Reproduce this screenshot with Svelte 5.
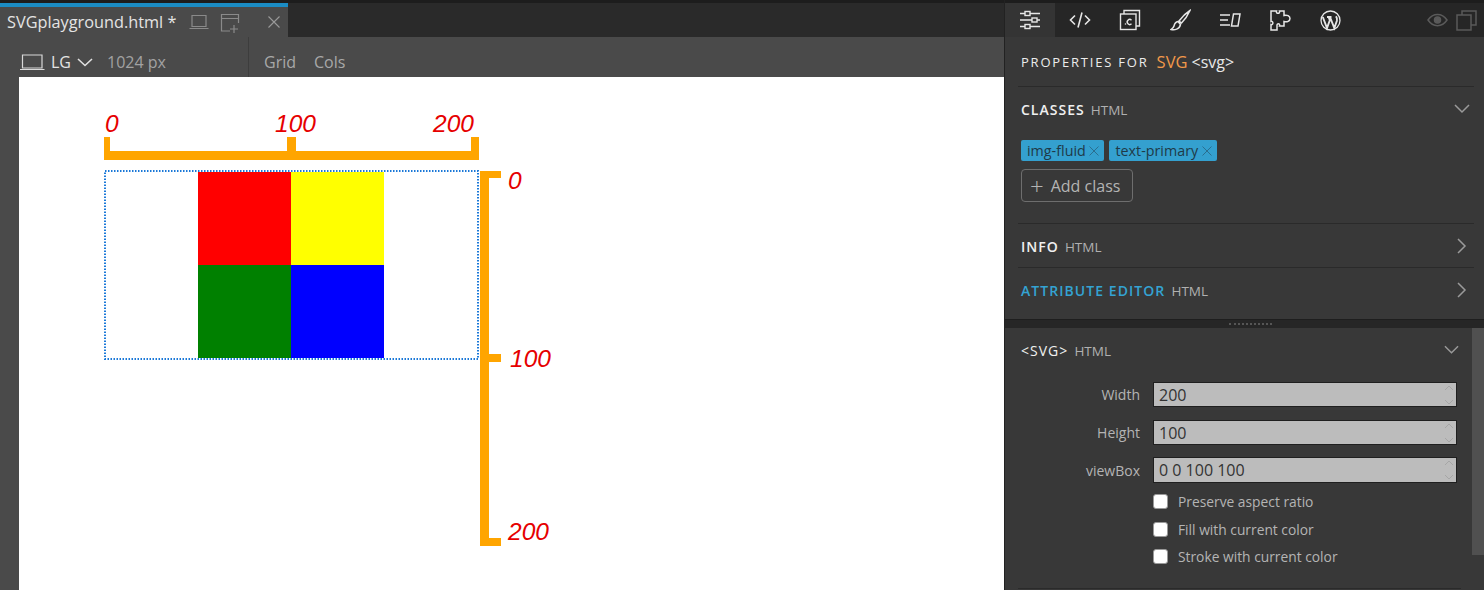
<script>
  const attrs = [
    { label: 'Width', value: '200' },
    { label: 'Height', value: '100' },
    { label: 'viewBox', value: '0 0 100 100' }
  ];
  const checks = ['Preserve aspect ratio', 'Fill with current color', 'Stroke with current color'];
  const chips = ['img-fluid', 'text-primary'];
</script>

<div class="app">
  <div class="left">
    <div class="tabbar">
      <div class="tab">
        <span class="tabname">SVGplayground.html *</span>
        <svg class="ic laptop" width="20" height="16" viewBox="0 0 20 16" fill="none" stroke="#8a8a8a" stroke-width="1.2">
          <path d="M3 1.5h14v11H3zM.5 14.5h19" />
        </svg>
        <svg class="ic newwin" width="22" height="22" viewBox="0 0 22 22" fill="none" stroke="#8a8a8a" stroke-width="1.2">
          <path d="M10 18H1.5V1.5h17V10M1.5 5.5h17M14 12v8M10 16h8" />
        </svg>
        <svg class="ic close" width="14" height="14" viewBox="0 0 14 14" fill="none" stroke="#9a9a9a" stroke-width="1.1">
          <path d="M1.5 1.5l11 11M12.5 1.5l-11 11" />
        </svg>
      </div>
    </div>
    <div class="toolbar">
      <div class="device">
        <svg width="25" height="17" viewBox="0 0 25 17" fill="none" stroke="#d8d8d8" stroke-width="1.2">
          <path d="M2.5 1H22v13H2.500zM0 15.500h24.500" />
        </svg>
        <span class="lg">LG</span>
        <svg width="16" height="9" viewBox="0 0 16 9" fill="none" stroke="#e0e0e0" stroke-width="1.6">
          <path d="M1 1l7 6.5L15 1" />
        </svg>
        <span class="px">1024 px</span>
      </div>
      <div class="grid-cols">
        <span>Grid</span>
        <span>Cols</span>
      </div>
    </div>
    <div class="stage">
      <div class="canvas">
        <svg class="drawing" width="985" height="513" viewBox="19 77 985 513">
          <g fill="orange">
            <rect x="104" y="151" width="375" height="9" />
            <rect x="104" y="137" width="6" height="20" />
            <rect x="287" y="137" width="9" height="20" />
            <rect x="471" y="137" width="8" height="20" />
            <rect x="480" y="171" width="9" height="375" />
            <rect x="480" y="171" width="21" height="7" />
            <rect x="480" y="354" width="21" height="8" />
            <rect x="480" y="538" width="21" height="8" />
          </g>
          <rect x="198" y="172" width="93" height="93" fill="red" />
          <rect x="291" y="172" width="93" height="93" fill="yellow" />
          <rect x="198" y="265" width="93" height="93" fill="green" />
          <rect x="291" y="265" width="93" height="93" fill="blue" />
          <rect x="105" y="171" width="373" height="188" fill="none" stroke="#1a78d8" stroke-width="2" stroke-dasharray="1.5 1.5" />
          <g class="nums">
            <text x="105" y="132">0</text>
            <text x="275" y="132">100</text>
            <text x="433" y="132">200</text>
            <text x="508" y="189">0</text>
            <text x="510" y="367">100</text>
            <text x="508" y="540">200</text>
          </g>
        </svg>
      </div>
    </div>
  </div>

  <div class="panel">
    <div class="iconbar">
      <div class="ibtn active">
        <svg width="22" height="20" viewBox="0 0 22 20" fill="none" stroke="#e6e6e6" stroke-width="1.4">
          <path d="M1 3.500h5M11 3.500h10M1 10h12M18 10h3M1 16.500h5M11 16.500h10" />
          <rect x="6" y="1.500" width="5" height="4" /><rect x="13" y="8" width="5" height="4" /><rect x="6" y="14.500" width="5" height="4" />
        </svg>
      </div>
      <div class="ibtn">
        <svg width="22" height="18" viewBox="0 0 22 18" fill="none" stroke="#e6e6e6" stroke-width="1.6">
          <path d="M6 4.500L1.500 9 6 13.500M16 4.500L20.500 9 16 13.500M13 1.500L9 16.500" />
        </svg>
      </div>
      <div class="ibtn">
        <svg width="22" height="22" viewBox="0 0 22 22" fill="none" stroke="#e6e6e6" stroke-width="1.4">
          <path d="M5 5V1.500h15.500V17H17" /><rect x="1.500" y="5" width="15.500" height="15.500" />
          <circle cx="6.500" cy="15" r=".8" fill="#e6e6e6" stroke="none" />
          <path d="M12.500 11.200a2.500 2.500 0 1 0 0 3.600" />
        </svg>
      </div>
      <div class="ibtn">
        <svg width="21" height="22" viewBox="0 0 21 22" fill="none" stroke="#e6e6e6" stroke-width="1.500">
          <path d="M20 1.500C16 4 12 8 9 12l2.500 2C15 10.500 18 6 20 1.500zM8 12.500c-3 .5-3.500 2.500-4 4.500-.3 1.500-1.500 2.500-3 3.500 3.500.8 8.500 0 9.500-5z" />
        </svg>
      </div>
      <div class="ibtn">
        <svg width="21" height="14" viewBox="0 0 21 14" fill="none" stroke="#e6e6e6" stroke-width="1.500">
          <path d="M0 2h10M0 7h8M0 12h10M13.500 1h6.500l-2 12h-6.500z" />
        </svg>
      </div>
      <div class="ibtn">
        <svg width="21" height="21" viewBox="0 0 21 21" fill="none" stroke="#e6e6e6" stroke-width="1.500">
          <path d="M1 1h5.500c-1 3 4 3 3 0H14v4.500c3-1 6 .5 6 3s-3 4-6 3V16H9.500c1-3-3-3-2.500 0v4H1v-5.500c2.500 1 2.500-4 0-3z" />
        </svg>
      </div>
      <div class="ibtn">
        <svg width="21" height="21" viewBox="0 0 21 21" fill="none" stroke="#e6e6e6">
          <circle cx="10.500" cy="10.500" r="9.500" stroke-width="1.300" />
          <path d="M2.800 7l4.200 11 2.800-7.800-1.400-3.700M7 7h4.500M10 7l4.300 11 2.600-7.300c.5-1.600.1-3-.9-4.500" stroke-width="1.900" />
        </svg>
      </div>
      <div class="dim">
        <svg width="21" height="14" viewBox="0 0 21 14" fill="none" stroke="#5a5a5a" stroke-width="1.500">
          <path d="M1 7c5-7.500 14-7.500 19 0-5 7.500-14 7.500-19 0z" /><circle cx="10.500" cy="7" r="3" fill="#5a5a5a" />
        </svg>
        <svg width="21" height="21" viewBox="0 0 21 21" fill="none" stroke="#5a5a5a" stroke-width="1.500">
          <path d="M6 5V1h14v14h-5" /><rect x="1" y="5" width="14" height="15" />
        </svg>
      </div>
    </div>

    <div class="title">
      <span class="caps">PROPERTIES FOR</span>
      <span class="tag">SVG</span>
      <span class="el">&lt;svg&gt;</span>
    </div>

    <section class="classes">
      <div class="head">
        <span><b>CLASSES</b> <i>HTML</i></span>
        <svg width="16" height="10" viewBox="0 0 16 10" fill="none" stroke="#9a9a9a" stroke-width="1.500"><path d="M1 1l7 7 7-7" /></svg>
      </div>
      <div class="chips">
        {#each chips as chip}
          <span class="chip">
            {chip}
            <svg width="10" height="10" viewBox="0 0 10 10" fill="none" stroke="#2a6f90" stroke-width="1"><path d="M.5.500l9 9M9.500.500l-9 9" /></svg>
          </span>
        {/each}
      </div>
      <div class="add"><span class="plus">+</span> Add class</div>
    </section>

    <section class="row">
      <span><b>INFO</b> <i>HTML</i></span>
      <svg width="10" height="16" viewBox="0 0 10 16" fill="none" stroke="#9a9a9a" stroke-width="1.500"><path d="M1 1l7 7-7 7" /></svg>
    </section>
    <section class="row last">
      <span><b class="blue">ATTRIBUTE EDITOR</b> <i>HTML</i></span>
      <svg width="10" height="16" viewBox="0 0 10 16" fill="none" stroke="#9a9a9a" stroke-width="1.500"><path d="M1 1l7 7-7 7" /></svg>
    </section>

    <div class="resizer"><span></span></div>

    <div class="lower">
      <div class="lower-body">
        <div class="head svg-head">
          <span><b class="thin">&lt;SVG&gt;</b> <i>HTML</i></span>
          <svg width="15" height="10" viewBox="0 0 16 10" fill="none" stroke="#9a9a9a" stroke-width="1.500"><path d="M1 1l7 7 7-7" /></svg>
        </div>
        {#each attrs as a}
          <div class="field">
            <label for={a.label}>{a.label}</label>
            <div class="inputwrap">
              <input id={a.label} value={a.value} />
              <svg width="10" height="22" viewBox="0 0 10 22" fill="none" stroke="#a6a6a6" stroke-width="1"><path d="M1 6l4-4 4 4M1 16l4 4 4-4" /></svg>
            </div>
          </div>
        {/each}
        <div class="checks">
          {#each checks as c}
            <div class="check"><span class="box"></span>{c}</div>
          {/each}
        </div>
      </div>
      <div class="scrollbar"></div>
    </div>
    <div class="endline"></div>
  </div>
</div>

<style>
  :global(body) {
    margin: 0;
    background: #383838;
  }

  .app {
    display: flex;
    width: 1484px;
    height: 590px;
    overflow: hidden;
    font-family: "Open Sans", "Noto Sans", sans-serif;
  }

  .left {
    width: 1004px;
    display: flex;
    flex-direction: column;
    background: #4a4a4a;
  }

  .tabbar {
    height: 37px;
    background: #2a2a2a;
    border-top: 3px solid #1d1d1d;
    box-sizing: border-box;
  }

  .tab {
    width: 288px;
    height: 34px;
    box-sizing: border-box;
    background: #4a4a4a;
    border-top: 4px solid #1b8cc4;
    display: flex;
    align-items: center;
    padding-left: 7px;
    color: #e4e4e4;
    font-size: 16.300px;
  }

  .tabname {
    white-space: nowrap;
  }

  .ic {
    flex: none;
  }

  .laptop {
    margin-left: 13px;
  }

  .newwin {
    margin-left: 11px;
    margin-top: 3px;
  }

  .close {
    margin-left: 25px;
  }

  .toolbar {
    height: 40px;
    display: flex;
    align-items: center;
    color: #a8a8a8;
    font-size: 16px;
  }

  .device {
    width: 249px;
    height: 100%;
    box-sizing: border-box;
    display: flex;
    align-items: center;
    padding: 10px 0 0 20px;
    border-right: 1px solid #3d3d3d;
  }

  .lg {
    color: #e4e4e4;
    margin: 0 6px;
  }

  .px {
    margin-left: 14px;
    color: #a2a2a2;
  }

  .grid-cols {
    display: flex;
    gap: 18px;
    padding: 10px 0 0 15px;
    color: #a8a8a8;
  }

  .stage {
    flex: 1;
    padding-left: 19px;
    min-height: 0;
  }

  .canvas {
    background: #fff;
    height: 100%;
  }

  .drawing {
    display: block;
  }

  .nums text {
    fill: #e60000;
    font-family: "Liberation Sans", Arial, sans-serif;
    font-style: italic;
    font-size: 24.500px;
  }

  .panel {
    width: 480px;
    box-sizing: border-box;
    background: #383838;
    border-left: 1px solid #222;
    color: #d8d8d8;
    display: flex;
    flex-direction: column;
  }

  .iconbar {
    height: 37px;
    flex: none;
    box-sizing: border-box;
    border-top: 3px solid #1d1d1d;
    background: #262626;
    display: flex;
    align-items: center;
  }

  .ibtn {
    width: 50px;
    height: 100%;
    display: flex;
    align-items: center;
    justify-content: center;
    flex: none;
  }

  .ibtn.active {
    background: #343434;
  }

  .dim {
    margin-left: auto;
    display: flex;
    align-items: center;
    gap: 8px;
    padding-right: 7px;
  }

  .title {
    height: 50px;
    flex: none;
    margin: 0 10px 0 13px;
    box-sizing: border-box;
    padding: 0 0 0 3px;
    border-bottom: 1px solid #2a2a2a;
    display: flex;
    align-items: center;
  }

  .caps {
    letter-spacing: 1.800px;
    font-size: 13px;
    color: #ececec;
    margin-right: 8px;
  }

  .tag {
    color: #f2994a;
    font-size: 16.500px;
    margin-right: 4px;
  }

  .el {
    font-size: 16px;
    color: #e8e8e8;
  }

  section {
    margin: 0 10px 0 13px;
    border-bottom: 1px solid #2a2a2a;
    box-sizing: border-box;
    flex: none;
  }

  .classes {
    height: 137px;
    padding: 0 0 0 3px;
  }

  .head {
    display: flex;
    justify-content: space-between;
    align-items: center;
    padding-right: 4px;
    height: 43px;
  }

  b {
    font-size: 14px;
    font-weight: 600;
    letter-spacing: 1px;
    color: #f0f0f0;
  }

  b.blue {
    color: #34a3d3;
    letter-spacing: 1.050px;
  }

  b.thin {
    font-weight: 400;
  }

  i {
    font-style: normal;
    font-size: 13.500px;
    color: #b0b0b0;
    margin-left: 2px;
  }

  .chips {
    display: flex;
    gap: 5px;
    margin-top: 10px;
  }

  .chip {
    background: #34a0cf;
    color: #1f3a48;
    font-size: 14.300px;
    height: 21px;
    line-height: 21px;
    padding: 0 5px 0 6px;
    border-radius: 2px;
    white-space: nowrap;
  }

  .add {
    margin-top: 8px;
    width: 112px;
    height: 33px;
    box-sizing: border-box;
    border: 1px solid #6e6e6e;
    border-radius: 4px;
    display: flex;
    align-items: center;
    padding-left: 8px;
    font-size: 16px;
    color: #b4b4b4;
    gap: 7px;
    white-space: nowrap;
  }

  .plus {
    font-size: 24px;
    font-weight: 300;
    line-height: 1;
  }

  .row {
    height: 44px;
    padding: 0 7px 0 3px;
    display: flex;
    align-items: center;
    justify-content: space-between;
  }

  .row.last {
    height: 51px;
    padding-bottom: 7px;
    border-bottom: none;
  }

  .resizer {
    height: 9px;
    flex: none;
    background: #262626;
    border-top: 1px solid #1e1e1e;
    box-sizing: border-box;
    display: flex;
    align-items: center;
    justify-content: center;
  }

  .resizer span {
    width: 43px;
    height: 0;
    border-top: 2px dotted #555;
    margin-left: 11px;
  }

  .lower {
    display: flex;
    height: 227px;
    flex: none;
  }

  .lower-body {
    flex: 1;
    min-width: 0;
    box-sizing: border-box;
    padding: 0 13px 0 16px;
  }

  .scrollbar {
    width: 12px;
    background: #505050;
    flex: none;
  }

  .svg-head {
    height: 54px;
    padding: 0 0 10px;
    box-sizing: border-box;
  }

  .field {
    display: flex;
    align-items: center;
    height: 25px;
    margin-bottom: 13px;
  }

  .field:nth-of-type(4) {
    height: 26px;
    margin-top: -1px;
  }

  label {
    width: 119px;
    flex: none;
    text-align: right;
    font-size: 14px;
    color: #b4b4b4;
  }

  .inputwrap {
    margin-left: 13px;
    width: 304px;
    height: 100%;
    position: relative;
  }

  input {
    width: 100%;
    height: 100%;
    box-sizing: border-box;
    border: 1px solid #1f1f1f;
    border-radius: 0;
    background: #bcbcbc;
    color: #333;
    font: 16px "Open Sans", sans-serif;
    padding: 0 5px;
    outline: none;
    display: block;
  }

  .inputwrap svg {
    position: absolute;
    right: 3px;
    top: 2px;
  }

  .checks {
    margin: -8px 0 0 132px;
  }

  .check {
    display: flex;
    align-items: center;
    height: 27.500px;
    font-size: 13.800px;
    color: #b4b4b4;
    white-space: nowrap;
  }

  .box {
    width: 15px;
    height: 15px;
    box-sizing: border-box;
    background: #fff;
    border-radius: 3px;
    margin-right: 10px;
    border: 1px solid #999;
    flex: none;
  }

  .endline {
    margin: 33px 23px 0 13px;
    border-top: 1px solid #2a2a2a;
  }
</style>
